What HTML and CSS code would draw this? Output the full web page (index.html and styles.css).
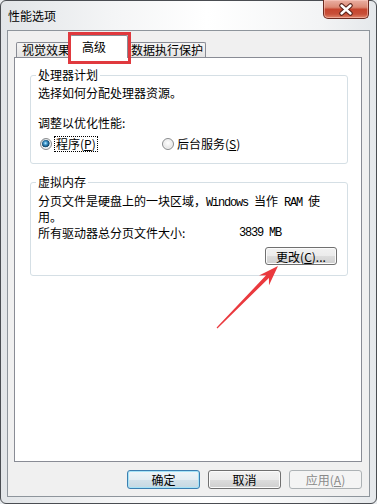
FILE: index.html
```html
<!DOCTYPE html>
<html lang="zh-CN">
  <head>
    <meta charset="UTF-8" />
    <meta name="viewport" content="width=device-width, initial-scale=1.0" />
    <title>性能选项</title>
    <link rel="stylesheet" href="styles.css">
  </head>
  <body>
    <div class="window">
      <!-- 标题栏 -->
      <div class="title-bar">
        <span class="title">性能选项</span>
        <button class="close-btn" aria-label="关闭">
          <svg width="44" height="17" viewBox="0 0 44 17">
            <path d="M17.5 4.5 L26.5 12.5 M26.5 4.5 L17.5 12.5" stroke="#5a2219" stroke-width="4.6" stroke-linecap="round" fill="none" />
            <path d="M17.5 4.5 L26.5 12.5 M26.5 4.5 L17.5 12.5" stroke="#ffffff" stroke-width="2.4" stroke-linecap="round" fill="none" />
          </svg>
        </button>
      </div>

      <div class="client">
        <div class="tabs">
          <div class="tab tab-first">视觉效果</div>
          <div class="tab tab-active">高级</div>
          <div class="tab tab-last">数据执行保护</div>
        </div>

        <div class="panel">
          <fieldset class="group group-cpu">
            <legend>处理器计划</legend>
            <p class="line">选择如何分配处理器资源。</p>
            <p class="line adjust">调整以优化性能:</p>
            <div class="radios">
              <label class="radio-item radio-first">
                <span class="radio checked"></span>
                <span class="focus">程序(<u>P</u>)</span>
              </label>
              <label class="radio-item">
                <span class="radio"></span>
                <span>后台服务(<u>S</u>)</span>
              </label>
            </div>
          </fieldset>

          <fieldset class="group group-memory">
            <legend>虚拟内存</legend>
            <p class="desc">分页文件是硬盘上的一块区域，<span class="mono">Windows </span>当作<span class="mono"> RAM </span>使<br>用。</p>
            <div class="size-row">
              <span class="size-label">所有驱动器总分页文件大小:</span>
              <span class="mono">3839 MB</span>
            </div>
            <div class="change-row">
              <button class="btn btn-change">更改(<u>C</u>)...</button>
            </div>
          </fieldset>
        </div>

        <div class="actions">
          <button class="btn btn-default">确定</button>
          <button class="btn">取消</button>
          <button class="btn" disabled>应用(<u>A</u>)</button>
        </div>
      </div>

      <!-- 标注：红框和箭头 -->
      <div class="mark-box"></div>
      <svg class="arrow" width="377" height="504" viewBox="0 0 377 504">
        <path d="M216.6 327.6 L266.1 275.3 L259 275.4 L278 266 L269 285.2 L268.9 278.1 L217.4 328.4 Z" fill="#ea393e" />
      </svg>
    </div>
  </body>
</html>
```

FILE: styles.css
```css
* {
  box-sizing: border-box;
  margin: 0;
  padding: 0;
}

body {
  width: 377px;
  height: 504px;
  overflow: hidden;
  background: #e9ecef;
  font-family: "Noto Sans CJK SC", "Liberation Sans", sans-serif;
  font-size: 12px;
  color: #000;
}

.window {
  position: relative;
  width: 377px;
  height: 504px;
  border: 1px solid #4a4d52;
  border-radius: 6px;
  background: linear-gradient(to right, #e2e5e8, #f4f5f6 30%, #ffffff 55%, #f3f4f5 85%, #e5e8eb);
}

/* 标题栏 */
.title-bar {
  display: flex;
  align-items: center;
  height: 29px;
  padding: 0 7px 0 7px;
}

.title {
  line-height: 14px;
  padding-top: 1px;
}

.close-btn {
  margin-left: auto;
  align-self: flex-start;
  width: 46px;
  height: 19px;
  margin-top: -1px;
  border: 1px solid #6b2a20;
  border-top: none;
  border-radius: 0 0 5px 5px;
  background: linear-gradient(#eab0a3, #dc8a75 40%, #c6452e 52%, #c84f38 78%, #e0866b);
  box-shadow: inset 0 0 0 1px rgba(255, 210, 200, 0.5);
  display: flex;
  align-items: center;
  justify-content: center;
}

/* 客户区 */
.client {
  display: flex;
  flex-direction: column;
  height: 467px;
  margin: 0 6px;
  padding: 0 7px 0 6px;
  background: #f0f0f0;
  border: 1px solid #8e959c;
}

.tabs {
  display: flex;
  align-items: flex-end;
  height: 26px;
  padding-left: 2px;
}

.tab {
  height: 15px;
  line-height: 14px;
  white-space: nowrap;
  border: 1px solid #898c95;
  border-bottom: none;
  border-radius: 2px 2px 0 0;
  background: linear-gradient(#f5f5f5, #e4e4e4);
}

.tab-first {
  width: 56px;
  padding-left: 5px;
}

.tab-active {
  position: relative;
  z-index: 1;
  width: 58px;
  height: 23px;
  margin: 0 0 -1px -2px;
  padding: 4px 0 0 11px;
  background: #fff;
}

.tab-last {
  width: 79px;
  margin-left: -1px;
  padding-left: 3px;
}

.panel {
  height: 405px;
  padding: 0 13px 0 15px;
  background: #fff;
  border: 1px solid #898c95;
}

/* 分组框 */
.group {
  border: 1px solid #d5dfe5;
  border-radius: 3px;
  padding: 5px 10px 12px 7px;
  min-width: 0;
}

.group legend {
  line-height: 12px;
  padding: 0 2px;
  margin-left: -2px;
}

.group-cpu {
  margin-top: 11px;
}

.group-memory {
  margin-top: 12px;
  padding-top: 6px;
  padding-bottom: 10px;
}

.line {
  line-height: 14px;
}

.adjust {
  margin-top: 16px;
}

.radios {
  display: flex;
  align-items: center;
  height: 14px;
  margin-top: 7px;
  line-height: 14px;
}

.radio-item {
  display: flex;
  align-items: center;
}

.radio-first {
  width: 122px;
  margin-left: 2px;
}

.radio {
  width: 12px;
  height: 12px;
  margin-right: 3px;
  border-radius: 50%;
  border: 1px solid #8a8c8e;
  background: radial-gradient(circle at 50% 40%, #ffffff, #d9d9d9);
  box-shadow: inset 0 0 0 1px #f3f3f3;
}

.radio.checked {
  background: radial-gradient(circle at 45% 42%, #c8f0ff 0, #4aa2d6 1.5px, #1d5f8c 3px, #164a6d 3.8px, #e6ebef 4.4px, #fafafa 100%);
}

.focus {
  outline: 1px dotted #000;
  padding: 0 1px;
}

.mono {
  font-family: "Liberation Mono", monospace;
  font-size: 12px;
  letter-spacing: -1.2px;
  white-space: pre;
}

.desc {
  line-height: 13px;
}

.size-row {
  display: flex;
  line-height: 14px;
  margin-top: 3px;
}

.size-label {
  width: 201px;
}

.change-row {
  display: flex;
  justify-content: flex-end;
  margin-top: 7px;
}

/* 按钮 */
.btn {
  width: 73px;
  height: 19px;
  font-family: inherit;
  font-size: 12px;
  line-height: 15px;
  color: #000;
  border: 1px solid #707070;
  border-radius: 3px;
  background: linear-gradient(#f2f2f2, #ebebeb 50%, #dddddd 50%, #cfcfcf);
  box-shadow: inset 0 0 0 1px #fbfbfb;
}

.btn-change {
  width: 72px;
  height: 18px;
}

.btn-default {
  border-color: #3c7fb1;
  box-shadow: inset 0 0 0 1px #a6e3f7;
  background: linear-gradient(#eef5f9, #e3edf3 50%, #d4e2ea 50%, #c6d8e2);
}

.btn:disabled {
  color: #8a8a8a;
  border-color: #adb2b5;
  background: #f4f4f4;
  box-shadow: none;
}

.actions {
  display: flex;
  justify-content: flex-end;
  gap: 8px;
  margin-top: 8px;
}

/* 标注 */
.mark-box {
  position: absolute;
  left: 67px;
  top: 31px;
  width: 63px;
  height: 32px;
  border: 3px solid #e0393e;
  z-index: 2;
}

.arrow {
  position: absolute;
  left: -1px;
  top: -1px;
  pointer-events: none;
  z-index: 2;
}
```
